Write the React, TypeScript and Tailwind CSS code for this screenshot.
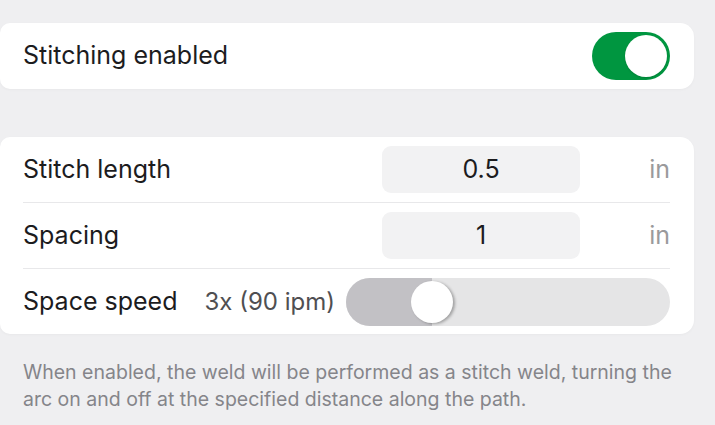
import React from "react";

const font = { fontFamily: "Inter, 'Noto Sans', sans-serif" };

function Row({ label, value, last }: { label: string; value: string; last?: boolean }) {
  return (
    <div className={`flex items-center h-[66px] ${last ? "" : "border-b border-[#e8e8ea]"}`}>
      <div className="flex-1 text-[25px] text-[#1c1c1e]">{label}</div>
      <div className="w-[198px] h-[47px] rounded-[9px] bg-[#f2f2f3] flex items-center justify-center text-[25px] text-[#1c1c1e]">
        {value}
      </div>
      <div className="w-[90px] text-right text-[25px] text-[#9a9a9c]">in</div>
    </div>
  );
}

export default function App() {
  return (
    <div className="w-[715px] h-[425px] bg-[#efeff1] overflow-hidden pr-[21px]" style={font}>
      <div className="h-[23px]" />
      <div className="h-[66px] bg-white rounded-r-[14px] rounded-l-[10px] shadow-[0_1px_3px_rgba(0,0,0,0.03)] flex items-center pl-[23px] pr-[24px]">
        <div className="flex-1 text-[25px] text-[#1c1c1e]">Stitching enabled</div>
        <div className="w-[78px] h-[48px] rounded-full bg-[#009640] flex items-center justify-end pr-[3px]">
          <div className="w-[42px] h-[42px] rounded-full bg-white shadow-[0_1px_2px_rgba(0,0,0,0.15)]" />
        </div>
      </div>
      <div className="h-[48px]" />
      <div className="bg-white rounded-r-[14px] rounded-l-[10px] shadow-[0_1px_3px_rgba(0,0,0,0.03)] pl-[23px] pr-[24px]">
        <Row label="Stitch length" value="0.5" />
        <Row label="Spacing" value="1" />
        <div className="flex items-center h-[65px]">
          <div className="text-[25px] text-[#1c1c1e]">Space speed</div>
          <div className="ml-[27px] text-[24px] text-[#4f4f52]">3x (90 ipm)</div>
          <div className="ml-[11px] flex-1 h-[48px] rounded-full bg-[#e5e5e6] relative overflow-hidden">
            <div className="absolute left-0 top-0 h-full w-[86px] bg-[#c2c1c5]" />
            <div className="absolute left-[65px] top-[3px] w-[42px] h-[42px] rounded-full bg-white shadow-[2px_1px_3px_rgba(0,0,0,0.3)]" />
          </div>
        </div>
      </div>
      <div className="pl-[23px] pt-[25px] text-[19.5px] leading-[27px] text-[#85858a]">
        When enabled, the weld will be performed as a stitch weld, turning the arc on and off at the specified distance along the path.
      </div>
    </div>
  );
}
